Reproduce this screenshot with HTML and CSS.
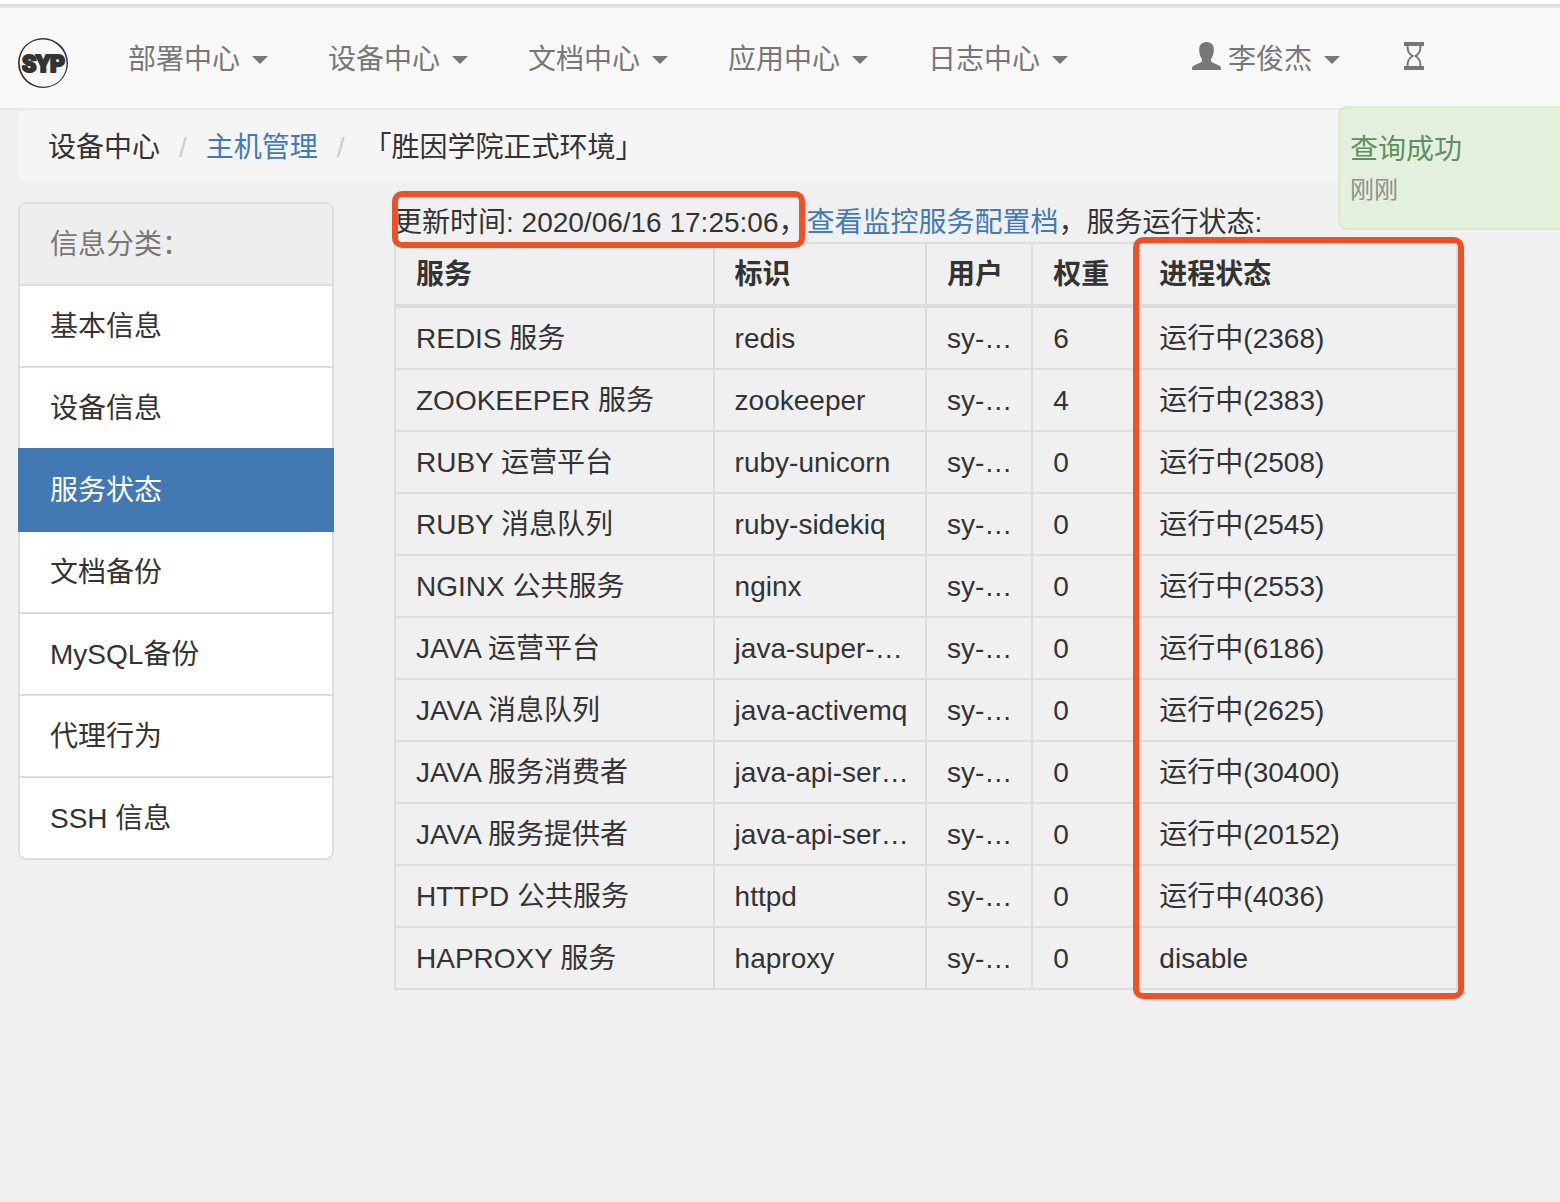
FILE: index.html
```html
<!DOCTYPE html>
<html lang="zh-CN">
<head>
<meta charset="utf-8">
<meta name="viewport" content="width=device-width, initial-scale=1">
<title>服务状态</title>
<link rel="stylesheet" href="styles.css">
</head>
<body>
<header class="navbar">
  <a class="brand" href="#" aria-label="SYP">
    <svg class="logo" viewBox="0 0 50 50">
      <path fill="#333" fill-rule="evenodd" d="M25 0a25 25 0 1 1 0 50a25 25 0 1 1 0-50zM26 1.600a24 24 0 0 0-17.400 6.200a24 24 0 0 0 15.400 40.800a24 24 0 0 0 17.600-6.200a24 24 0 0 0-15.600-40.800z"/>
      <text class="logo-text" x="4" y="34">S</text>
      <text class="logo-text" x="18" y="34">Y</text>
      <text class="logo-text" x="32" y="34">P</text>
    </svg>
  </a>
  <nav class="menu">
    <button class="menu-item" type="button">部署中心<span class="caret"></span></button>
    <button class="menu-item" type="button">设备中心<span class="caret"></span></button>
    <button class="menu-item" type="button">文档中心<span class="caret"></span></button>
    <button class="menu-item" type="button">应用中心<span class="caret"></span></button>
    <button class="menu-item" type="button">日志中心<span class="caret"></span></button>
  </nav>
  <div class="tools">
    <button class="menu-item" type="button"><svg class="icon icon-user" viewBox="0 0 30 28"><path fill="currentColor" d="M14.500 0c4.500 0 7.300 2.800 7.300 7.500c0 4-.8 7-2.800 9.500v1.500c0 1 .5 1.500 1.500 2l6.500 3c1.500.7 2 1.500 2 4.500H0c0-3 .5-3.800 2-4.500l6.500-3c1-.5 1.500-1 1.500-2V17c-2-2.500-2.800-5.500-2.800-9.500c0-4.700 2.800-7.500 7.300-7.500z"/></svg>李俊杰<span class="caret"></span></button>
    <button class="menu-item" type="button" aria-label="任务"><svg class="icon icon-glass" viewBox="0 0 20 28"><path fill="currentColor" d="M0 0h20v4H0zM0 24h20v4H0z"/><path fill="none" stroke="currentColor" stroke-width="2" d="M3.500 4c0 5.500 1.500 7.500 5 10C5 16.500 3.500 18.500 3.500 24M16.500 4c0 5.500-1.500 7.500-5 10c3.500 2.500 5 4.500 5 10"/></svg></button>
  </div>
</header>

<div class="toast" role="status">
  <p class="toast-title">查询成功</p>
  <p class="toast-time">刚刚</p>
</div>

<main class="container">
  <ol class="breadcrumb">
    <li>设备中心</li>
    <li><a href="#">主机管理</a></li>
    <li>「胜因学院正式环境」</li>
  </ol>
  <div class="columns">
    <ul class="side-list">
      <li class="side-head">信息分类：</li>
      <li><a href="#">基本信息</a></li>
      <li><a href="#">设备信息</a></li>
      <li><a class="active" href="#">服务状态</a></li>
      <li><a href="#">文档备份</a></li>
      <li><a href="#">MySQL备份</a></li>
      <li><a href="#">代理行为</a></li>
      <li><a href="#">SSH 信息</a></li>
    </ul>
    <section class="content">
      <p class="summary"><span class="mark-time">更新时间: 2020/06/16 17:25:06，</span><a href="#">查看监控服务配置档</a>，服务运行状态:</p>
      <div class="table-wrap">
        <table class="services">
          <thead>
            <tr><th class="w30">服务</th><th class="w20">标识</th><th class="w10">用户</th><th class="w10">权重</th><th class="w30">进程状态</th></tr>
          </thead>
          <tbody>
            <tr><td>REDIS 服务</td><td>redis</td><td>sy-…</td><td>6</td><td>运行中(2368)</td></tr>
            <tr><td>ZOOKEEPER 服务</td><td>zookeeper</td><td>sy-…</td><td>4</td><td>运行中(2383)</td></tr>
            <tr><td>RUBY 运营平台</td><td>ruby-unicorn</td><td>sy-…</td><td>0</td><td>运行中(2508)</td></tr>
            <tr><td>RUBY 消息队列</td><td>ruby-sidekiq</td><td>sy-…</td><td>0</td><td>运行中(2545)</td></tr>
            <tr><td>NGINX 公共服务</td><td>nginx</td><td>sy-…</td><td>0</td><td>运行中(2553)</td></tr>
            <tr><td>JAVA 运营平台</td><td>java-super-…</td><td>sy-…</td><td>0</td><td>运行中(6186)</td></tr>
            <tr><td>JAVA 消息队列</td><td>java-activemq</td><td>sy-…</td><td>0</td><td>运行中(2625)</td></tr>
            <tr><td>JAVA 服务消费者</td><td>java-api-ser…</td><td>sy-…</td><td>0</td><td>运行中(30400)</td></tr>
            <tr><td>JAVA 服务提供者</td><td>java-api-ser…</td><td>sy-…</td><td>0</td><td>运行中(20152)</td></tr>
            <tr><td>HTTPD 公共服务</td><td>httpd</td><td>sy-…</td><td>0</td><td>运行中(4036)</td></tr>
            <tr><td>HAPROXY 服务</td><td>haproxy</td><td>sy-…</td><td>0</td><td>disable</td></tr>
          </tbody>
        </table>
      </div>
    </section>
  </div>
</main>
</body>
</html>
```
FILE: styles.css
```css
*, *::before, *::after { box-sizing: border-box; }

body {
  margin: 0;
  background: #f0f0f0;
  color: #333;
  font: 28px/40px "Liberation Sans", "Noto Sans CJK SC", sans-serif;
}

a { color: #427ab5; text-decoration: none; }
p, ul, ol { margin: 0; padding: 0; list-style: none; }

/* Top bar */
body::before {
  content: "";
  display: block;
  height: 6px;
  background: #fff;
  border-bottom: 2px solid #dcdcdf;
}

.navbar {
  display: flex;
  align-items: center;
  height: 104px;
  padding: 0 18px;
  background: #f8f8f8;
  border-top: 2px solid #e7e7e7;
  border-bottom: 2px solid #e7e7e7;
}

.brand { display: flex; width: 80px; padding-top: 10px; }
.logo { width: 50px; height: 50px; }
.logo-text {
  font: 900 23px Roboto, sans-serif;
  fill: #333;
  stroke: #333;
  stroke-width: 2px;
  stroke-linejoin: round;
}

.menu, .tools { display: flex; }
.tools { margin-left: 64px; }

.menu-item {
  display: flex;
  align-items: center;
  height: 100px;
  padding: 4px 30px 0;
  border: 0;
  background: none;
  color: #777;
  font: inherit;
}

.caret {
  margin-left: 12px;
  border: 8px solid transparent;
  border-top-color: currentColor;
  border-bottom: 0;
}
.menu .menu-item { width: 200px; }
.icon { height: 28px; margin-bottom: 8px; }
.icon-user { width: 30px; margin-right: 6px; }
.icon-glass { width: 20px; margin-left: 4px; }

/* Notification */
.toast {
  position: absolute;
  top: 106px;
  right: 0;
  width: 222px;
  height: 124px;
  padding: 22px 10px;
  border: 2px solid #d6e9c6;
  border-right: 0;
  border-radius: 8px 0 0 8px;
  background: #dff0d8;
  opacity: 0.8;
}
.toast-title { color: #3c763d; }
.toast-time { color: #777; font-size: 24px; }

/* Page body */
.container { padding: 0 102px 40px 18px; }

.breadcrumb {
  display: flex;
  padding: 18px 30px 14px;
  margin-bottom: 20px;
  border-radius: 8px;
  background: #f5f5f5;
}
.breadcrumb li + li::before {
  content: "/";
  margin: 0 19px;
  color: #ccc;
}

.columns {
  display: grid;
  grid-template-columns: 316fr 1064fr;
  gap: 60px;
  align-items: start;
}

.side-list {
  border: 2px solid #ddd;
  border-radius: 8px;
  background: #fff;
}
.side-list li + li { border-top: 2px solid #ddd; }
.side-list a, .side-head { display: block; padding: 21px 30px 19px; }
.side-list a { color: #333; }
.side-head {
  border-radius: 6px 6px 0 0;
  background: #eee;
  color: #777;
}
.side-list a.active {
  margin: -2px;
  padding: 23px 32px 21px;
  background: #4279b2;
  color: #fff;
}
.side-list li:has(.active) + li { border-top-color: transparent; }

.summary {
  height: 40px;
  padding-top: 1px;
  white-space: nowrap;
}
.mark-time { position: relative; z-index: 1; }

/* Red highlight frames */
.mark-time::after, .table-wrap::after {
  content: "";
  position: absolute;
  border: 6px solid #f05025;
  border-radius: 10px;
}
.mark-time::after { inset: -16px 1px -10px -2px; }
.table-wrap::after {
  top: -5px;
  right: -6px;
  bottom: -9px;
  width: calc(30% + 12px);
}

.table-wrap { position: relative; }
.services {
  width: 100%;
  table-layout: fixed;
  border-collapse: collapse;
}
.services th, .services td {
  padding: 11px 10px 9px 20px;
  border: 2px solid #ddd;
  text-align: left;
  white-space: nowrap;
}
.services th { border-bottom-width: 4px; }
.w30 { width: 30%; }
.w20 { width: 20%; }
.w10 { width: 10%; }
```
